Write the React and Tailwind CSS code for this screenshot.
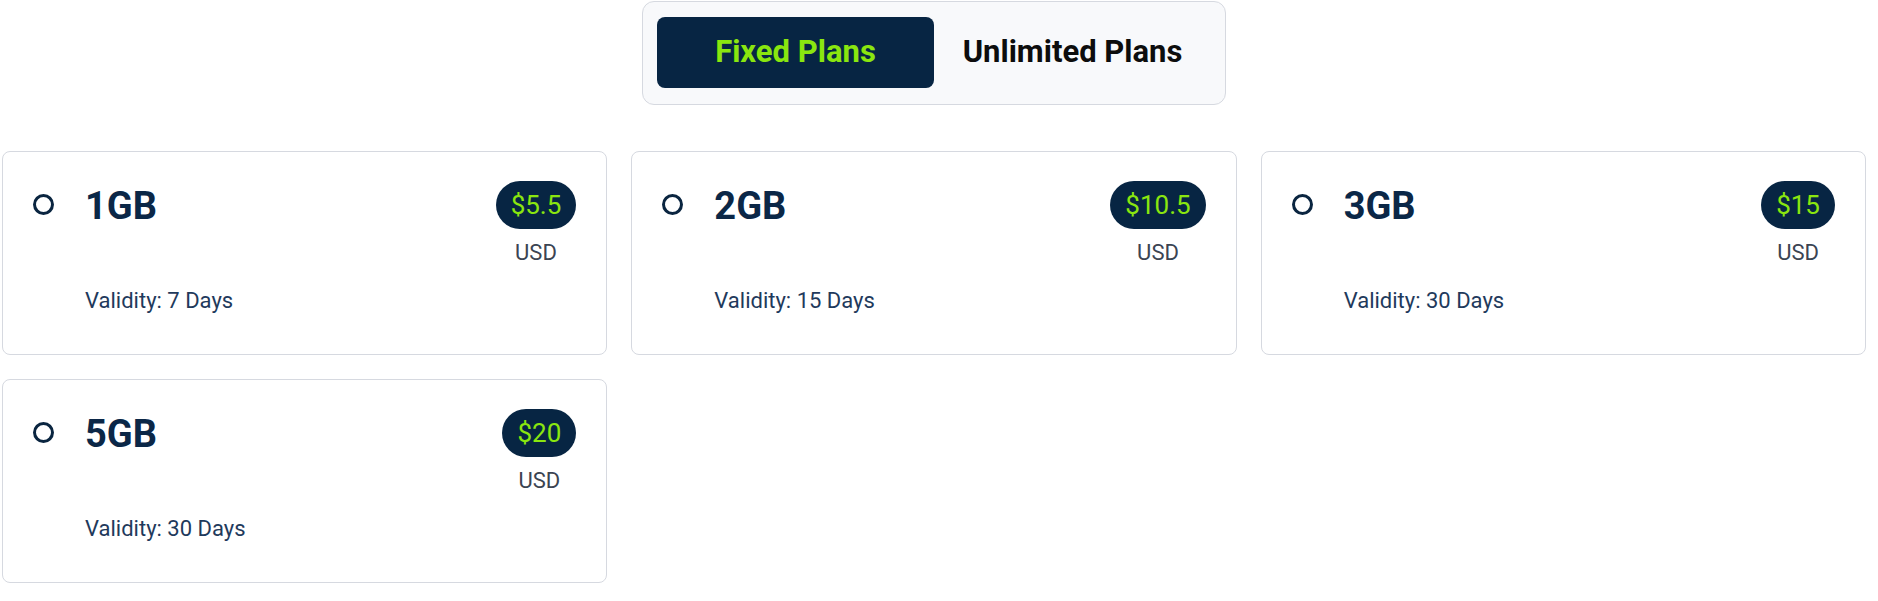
import React, { useState } from "react";

const plans = [
    { id: "1gb", size: "1GB", price: "$5.5", days: 7 },
    { id: "2gb", size: "2GB", price: "$10.5", days: 15 },
    { id: "3gb", size: "3GB", price: "$15", days: 30 },
    { id: "5gb", size: "5GB", price: "$20", days: 30 },
];

function PlanCard({ plan, selected, onSelect }) {
    return (
        <button
            type="button"
            onClick={() => onSelect(plan.id)}
            className="flex h-[204px] items-start rounded-lg border border-[#d6d9e0] bg-white px-[30px] pt-[29px] text-left"
        >
            {/* radio */}
            <div className="mt-[13px] flex h-[21px] w-[21px] shrink-0 items-center justify-center rounded-full border-[3px] border-[#0a2540]">
                {selected && <div className="h-[9px] w-[9px] rounded-full bg-[#0a2540]" />}
            </div>

            <div className="ml-[31px] flex-1">
                <div className="mt-[6px] text-[38px] font-bold leading-none text-[#0b2747]">{plan.size}</div>
                <div className="mt-[65px] text-[22px] leading-none text-[#1f3a5c]">
                    Validity: {plan.days} Days
                </div>
            </div>

            <div className="flex flex-col items-center">
                <div className="flex h-[48px] items-center rounded-full bg-[#072543] px-[15px] text-[26px] text-[#8ae60f]">
                    {plan.price}
                </div>
                <div className="mt-[13px] text-[22px] leading-none text-[#3b4452]">USD</div>
            </div>
        </button>
    );
}

export default function App() {
    const [tab, setTab] = useState("fixed");
    const [selected, setSelected] = useState(null);

    const tabClass = (active) =>
        active
            ? "h-[71px] w-[277px] rounded-lg bg-[#072543] text-[31px] font-bold text-[#8ae60f]"
            : "h-[71px] w-[277px] rounded-lg text-[31px] font-bold text-[#0d0d0d]";

    return (
        <div className="min-h-screen bg-white" style={{ fontFamily: "Roboto, 'Liberation Sans', sans-serif" }}>
            <div className="ml-[2px] w-[1864px]">
                {/* plan type toggle */}
                <div className="flex justify-center pt-px">
                    <div className="flex rounded-xl border border-[#d6d9e0] bg-[#f8f9fb] px-[14px] pt-[15px] pb-[16px]">
                        <button type="button" className={tabClass(tab === "fixed")} onClick={() => setTab("fixed")}>
                            Fixed Plans
                        </button>
                        <button type="button" className={tabClass(tab === "unlimited")} onClick={() => setTab("unlimited")}>
                            Unlimited Plans
                        </button>
                    </div>
                </div>

                {/* plans */}
                <div className="mt-[46px] grid grid-cols-3 gap-6">
                    {plans.map((p) => (
                        <PlanCard key={p.id} plan={p} selected={selected === p.id} onSelect={setSelected} />
                    ))}
                </div>
            </div>
        </div>
    );
}
